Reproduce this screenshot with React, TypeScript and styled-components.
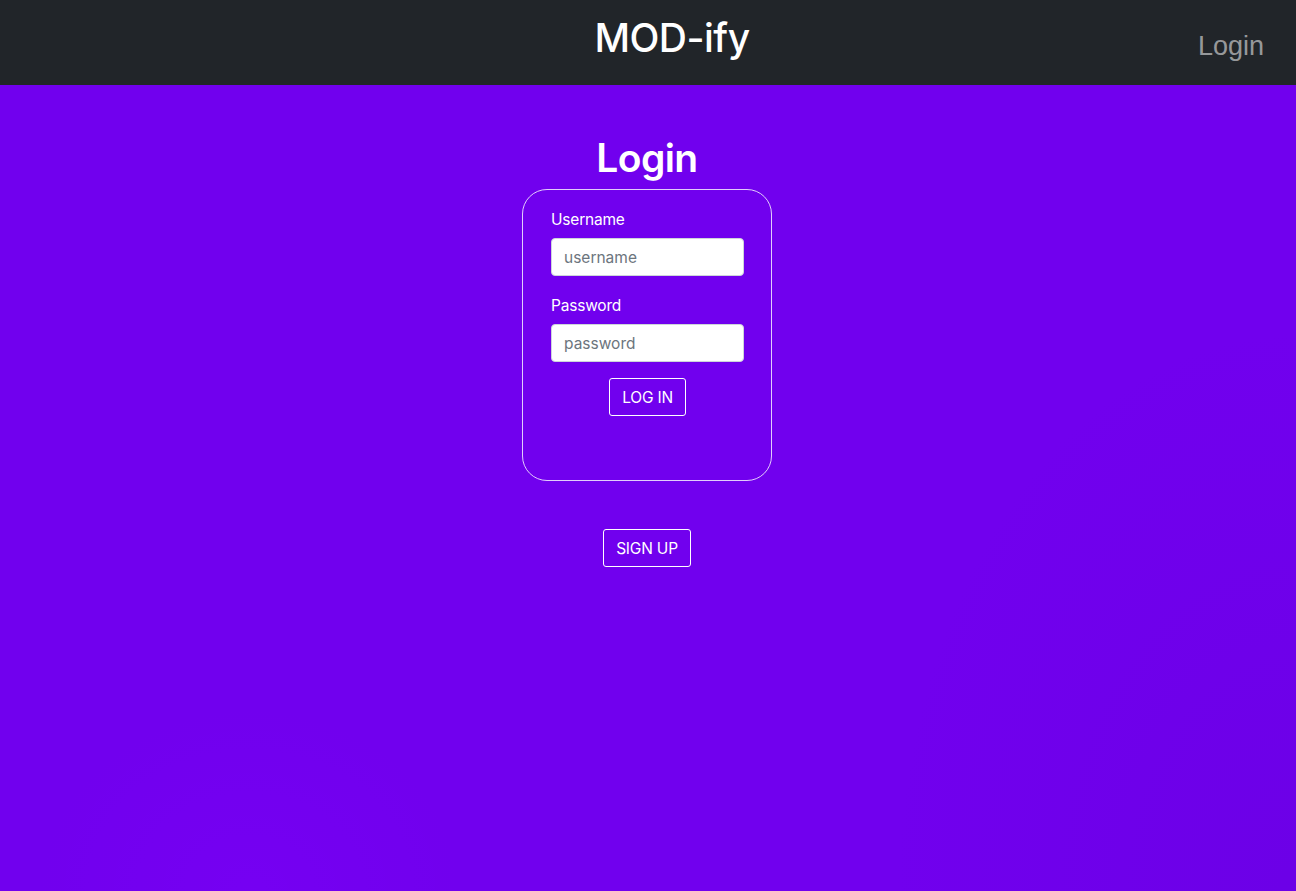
import React from "react";
import styled, { createGlobalStyle } from "styled-components";

const Global = createGlobalStyle`
  html, body { margin: 0; padding: 0; }
  body {
    font-family: Inter, "Helvetica Neue", Arial, sans-serif;
    background: #7100ee;
  }
  * { box-sizing: border-box; }
`;

const Page = styled.div`
  min-height: 891px;
  display: flex;
  flex-direction: column;
  background:
    radial-gradient(ellipse 300px 260px at 250px 891px, rgba(130, 0, 255, 0.25), transparent 70%),
    radial-gradient(ellipse 500px 700px at 1296px 891px, rgba(100, 0, 220, 0.4), transparent 80%),
    #7100ee;
`;

const NavBar = styled.header`
  height: 85px;
  background: #212529;
  position: relative;
  display: flex;
  justify-content: center;
  align-items: flex-start;
`;

const Brand = styled.div`
  font-family: Inter, Arial, sans-serif;
  font-weight: 500;
  letter-spacing: -0.5px;
  color: #fff;
  font-size: 39px;
  line-height: 1;
  margin-top: 18px;
  margin-left: 48px;
`;

const NavLink = styled.a`
  position: absolute;
  right: 32px;
  top: 33px;
  font-family: "Liberation Sans", Arial, sans-serif;
  color: rgba(255, 255, 255, 0.55);
  font-size: 27px;
  line-height: 1;
  text-decoration: none;
`;

const Main = styled.main`
  display: flex;
  flex-direction: column;
  align-items: center;
  padding-top: 51px;
  padding-right: 2px;
`;

const Title = styled.h1`
  margin: 0 0 9px;
  color: #fff;
  font-size: 39px;
  font-weight: 600;
  letter-spacing: -0.6px;
  line-height: 44px;
`;

const Card = styled.form`
  width: 250px;
  height: 292px;
  border: 1px solid rgba(255, 255, 255, 0.8);
  border-radius: 25px;
  padding: 18px 27px 0 28px;
  display: flex;
  flex-direction: column;
`;

const Label = styled.label`
  color: #fff;
  font-size: 15.5px;
  letter-spacing: -0.2px;
  line-height: 24px;
  margin-bottom: 6px;
`;

const Input = styled.input`
  width: 193px;
  height: 38px;
  border: 1px solid #ced4da;
  border-radius: 4px;
  padding: 0 12px;
  font-family: Inter, sans-serif;
  font-size: 15.5px;
  color: #212529;
  margin-bottom: 18px;
  &::placeholder { color: #6c757d; }
`;

const Button = styled.button`
  align-self: center;
  height: 38px;
  padding: 0 12px;
  background: transparent;
  border: 1px solid #fff;
  border-radius: 3px;
  color: #fff;
  font-family: Inter, sans-serif;
  font-size: 15.5px;
  letter-spacing: -0.2px;
`;

const CardButton = styled(Button)`
  margin-top: -2px;
`;

const SignUp = styled(Button)`
  margin-top: 48px;
`;

export default function App() {
  return (
    <Page>
      <Global />
      <NavBar>
        <Brand>MOD-ify</Brand>
        <NavLink href="#">Login</NavLink>
      </NavBar>
      <Main>
        <Title>Login</Title>
        <Card onSubmit={(e) => e.preventDefault()}>
          <Label>Username</Label>
          <Input placeholder="username" />
          <Label>Password</Label>
          <Input type="password" placeholder="password" />
          <CardButton type="submit">LOG IN</CardButton>
        </Card>
        <SignUp type="button">SIGN UP</SignUp>
      </Main>
    </Page>
  );
}
